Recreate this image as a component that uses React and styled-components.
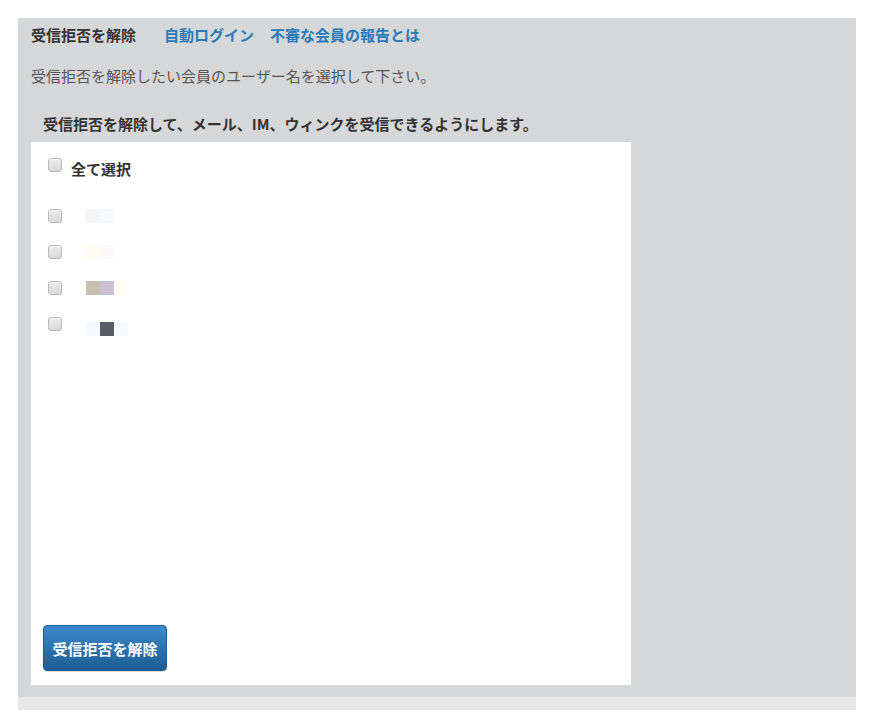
import React from 'react';
import styled, { createGlobalStyle } from 'styled-components';

const GlobalStyle = createGlobalStyle`
  body {
    margin: 0;
    background: #ffffff;
    font-family: "Noto Sans CJK JP", "Noto Sans", sans-serif;
    color: #333333;
  }
`;

const Page = styled.div`
  padding: 18px 20px 0 18px;
`;

const Panel = styled.section`
  background: #d5d7d9;
  padding: 7px 13px 12px 13px;
`;

const NavRow = styled.div`
  display: flex;
  align-items: center;
  height: 20px;
  font-size: 15px;
  line-height: 20px;
`;

const NavTitle = styled.span`
  font-weight: bold;
  color: #333333;
  margin-right: 28px;
`;

const NavLink = styled.a`
  font-weight: bold;
  color: #2a7ab9;
  text-decoration: none;
  margin-right: 16px;
  cursor: pointer;
`;

const Description = styled.p`
  margin: 21px 0 0 0;
  font-size: 15px;
  line-height: 20px;
  color: #555555;
`;

const Heading = styled.h3`
  margin: 28px 0 8px 12px;
  font-size: 15px;
  line-height: 20px;
  font-weight: bold;
  color: #333333;
`;

const Card = styled.form`
  background: #ffffff;
  width: 600px;
  height: 543px;
  box-sizing: border-box;
  padding: 16px 0 14px 0;
  display: flex;
  flex-direction: column;
`;

const SelectAllRow = styled.label`
  display: flex;
  align-items: center;
  height: 20px;
  padding-left: 17px;
  font-size: 15px;
  font-weight: bold;
  color: #333333;
`;

const Box = styled.input.attrs({ type: 'checkbox' })`
  appearance: none;
  margin: 0;
  width: 14px;
  height: 14px;
  box-sizing: border-box;
  border: 1px solid #b9b9b9;
  border-radius: 3px;
  background: linear-gradient(#ececec, #d9d9d9);
  box-shadow: inset 0 1px 1px rgba(255, 255, 255, 0.6);
  transform: translateY(${(p) => p.$shift || 0}px);
`;

const SelectAllText = styled.span`
  margin-left: 9px;
`;

const UserList = styled.ul`
  list-style: none;
  margin: 31px 0 0 0;
  padding: 0;
  flex: 1;
`;

const UserRow = styled.li`
  display: flex;
  align-items: flex-start;
  height: 36px;
  padding-left: 17px;
`;

const NameThumb = styled.span`
  display: grid;
  grid-template-columns: repeat(3, 14px);
  grid-auto-rows: 14px;
  margin-left: 24px;
  margin-top: ${(p) => p.$top}px;
`;

const Pixel = styled.span`
  background: ${(p) => p.$color};
`;

const SubmitButton = styled.button`
  align-self: flex-start;
  margin-left: 12px;
  width: 124px;
  height: 46px;
  border: 1px solid #1f5b8e;
  border-radius: 4px;
  background: linear-gradient(#3d89ca, #2a6ea9 60%, #1f5c92);
  color: #ffffff;
  font-family: "Noto Sans CJK JP", sans-serif;
  font-size: 15px;
  font-weight: bold;
  cursor: pointer;
  box-shadow: 0 1px 1px rgba(0, 0, 0, 0.15);
`;

const BottomStrip = styled.div`
  height: 13px;
  background: #e8e8e8;
`;

const users = [
  { id: 1, top: 0, pixels: ['#f3f5f9', '#f8f9fb', '#ffffff'] },
  { id: 2, top: 0, pixels: ['#fffdf3', '#fcf9fb', '#ffffff'] },
  { id: 3, top: 0, pixels: ['#c9bfae', '#cbc0d5', '#fffdf6'] },
  { id: 4, top: 5, pixels: ['#f4fafd', '#5b5c67', '#f8fbfd'] },
];

function App() {
  return (
    <Page>
      <GlobalStyle />
      <Panel>
        <NavRow>
          <NavTitle>受信拒否を解除</NavTitle>
          <NavLink>自動ログイン</NavLink>
          <NavLink>不審な会員の報告とは</NavLink>
        </NavRow>
        <Description>受信拒否を解除したい会員のユーザー名を選択して下さい。</Description>
        <Heading>受信拒否を解除して、メール、IM、ウィンクを受信できるようにします。</Heading>
        <Card>
          <SelectAllRow>
            <Box $shift={-3} />
            <SelectAllText>全て選択</SelectAllText>
          </SelectAllRow>
          <UserList>
            {users.map((u) => (
              <UserRow key={u.id}>
                <Box />
                <NameThumb $top={u.top}>
                  {u.pixels.map((c, i) => (
                    <Pixel key={i} $color={c} />
                  ))}
                </NameThumb>
              </UserRow>
            ))}
          </UserList>
          <SubmitButton type="button">受信拒否を解除</SubmitButton>
        </Card>
      </Panel>
      <BottomStrip />
    </Page>
  );
}

export default App;
